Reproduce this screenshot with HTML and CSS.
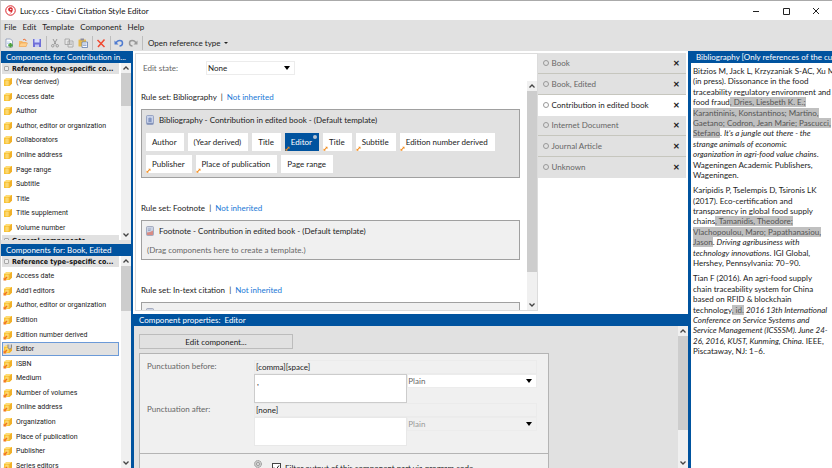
FILE: index.html
```html
<!DOCTYPE html>
<html lang="en">
<head>
<meta charset="utf-8">
<title>Lucy.ccs - Citavi Citation Style Editor</title>
<link rel="stylesheet" href="styles.css">
</head>
<body>
<svg class="defs" aria-hidden="true">
  <symbol id="cube" viewBox="0 0 20 20">
    <path d="M2 6 7 2h11v11l-5 5H2z" fill="#f8c335"/>
    <path d="M2 6 7 2h11l-5 4z" fill="#ffdc74"/>
    <path d="M13 6l5-4v11l-5 5z" fill="#f0b02a"/>
    <path d="M4 10h8M8 7v10M4 14h8" stroke="#ffe69a" stroke-width="1.5" fill="none"/>
  </symbol>
  <symbol id="cube-link" viewBox="0 0 20 20">
    <use href="#cube"/>
    <path d="M1 19V13l2 2 4-4 2 2-4 4 2 2z" fill="#f2741f"/>
  </symbol>
  <symbol id="up" viewBox="0 0 10 10"><path d="M2.500 6.500 5 4l2.500 2.500" fill="none" stroke="#444" stroke-width="1.300"/></symbol>
  <symbol id="down" viewBox="0 0 10 10"><path d="M2.500 3.500 5 6l2.500-2.500" fill="none" stroke="#444" stroke-width="1.300"/></symbol>
  <symbol id="page" viewBox="0 0 16 20"><rect x="1" y="1" width="14" height="18" rx="2" fill="#c9d3ea" stroke="#8493b8" stroke-width="1.500"/><path d="M8 5v9M4 8h8M4 12h8" stroke="#5a70a8" stroke-width="1.500"/><path d="M2 17h12" stroke="#8493b8" stroke-width="3"/></symbol>
  <symbol id="page-red" viewBox="0 0 16 20"><rect x="1" y="1" width="14" height="18" rx="2" fill="#ccd4e4" stroke="#929ab0" stroke-width="1.500"/><path d="M4 6h6M4 9h5" stroke="#8c9cc0" stroke-width="1.500"/><path d="M2 18v-5l6-1 6-3v9z" fill="#d88c84"/></symbol>
  <symbol id="arrow" viewBox="0 0 10 10"><path d="M1 9.500V5l1.500 1.500L6 3 4.500 1.500H9V6L7.500 4.500 4 8l1.500 1.500z" fill="#f28c1e"/></symbol>
</svg>

<div class="window">
  <header class="titlebar">
    <svg class="logo" viewBox="0 0 22 22"><circle cx="11" cy="11" r="9.500" fill="#fff" stroke="#d8232a" stroke-width="2"/><path d="M12 4.500a4.500 4.500 0 1 0 .5 8.500c-.6 2-1.600 3.300-3.500 4.500 4-1 6.500-4.500 6.500-8.500 0-2.700-1.300-4.500-3.500-4.500z" fill="#d8232a"/><circle cx="11.500" cy="9" r="1.500" fill="#fff"/></svg>
    <h1>Lucy.ccs - Citavi Citation Style Editor</h1>
    <div class="winbuttons">
      <button aria-label="Minimize"><svg viewBox="0 0 10 10"><path d="M2 5.500h6" stroke="#222"/></svg></button>
      <button aria-label="Maximize"><svg viewBox="0 0 10 10"><path d="M2.500 2.500h6v6h-6z" fill="none" stroke="#222"/></svg></button>
      <button aria-label="Close"><svg viewBox="0 0 10 10"><path d="M2 2l6 6M8 2 2 8" stroke="#222"/></svg></button>
    </div>
  </header>

  <nav class="menubar">
    <button>File</button><button>Edit</button><button>Template</button><button>Component</button><button>Help</button>
  </nav>

  <div class="toolbar">
    <button aria-label="New"><svg viewBox="0 0 20 20"><path d="M4 2h9l4 4v12H4z" fill="#fff" stroke="#7d8fb0" stroke-width="1.500"/><path d="M6 8h7M6 11h6" stroke="#a9c3e8" stroke-width="1.500"/><path d="M13 10v9M8.500 14.500h9" stroke="#4ba13d" stroke-width="4"/></svg></button>
    <button aria-label="Open"><svg viewBox="0 0 20 20"><path d="M2 17V6h6l2 2h7v9z" fill="#f7b868"/><path d="M2 17l3-7h14l-3 7z" fill="#ffd08b" stroke="#eb9a4a"/><path d="M10 4c3-3 6-1 6 2" fill="none" stroke="#ee6d36" stroke-width="2"/></svg></button>
    <button aria-label="Save"><svg viewBox="0 0 20 20"><path d="M2 2h16v16H2z" fill="#6f6fd8"/><path d="M5 2h10v7H5z" fill="#d6dcfa"/><path d="M6 13h8v5H6z" fill="#c4c8f2"/></svg></button>
    <span class="sep"></span>
    <button aria-label="Cut"><svg viewBox="0 0 20 20"><path d="M6 2l6 11M14 2 8 13" stroke="#999" stroke-width="2"/><circle cx="5.500" cy="15.500" r="2.500" fill="none" stroke="#999" stroke-width="2"/><circle cx="14.500" cy="15.500" r="2.500" fill="none" stroke="#999" stroke-width="2"/></svg></button>
    <button aria-label="Copy"><svg viewBox="0 0 20 20"><path d="M2 2h9v11H2zM8 6h10v12H8z" fill="#e6e6e6" stroke="#9c9c9c" stroke-width="1.500"/><path d="M10 10h6M10 13h6" stroke="#aaa" stroke-width="1.500"/></svg></button>
    <button aria-label="Paste"><svg viewBox="0 0 20 20"><rect x="1" y="3" width="15" height="14" rx="1" fill="#e6b94e"/><path d="M5 1h7v4H5z" fill="#8c8c9c"/><path d="M8 8h11v11H8z" fill="#f6f8ff" stroke="#5977a9" stroke-width="1.500"/><path d="M10 12h7M10 15h7" stroke="#8098bd" stroke-width="1.500"/></svg></button>
    <span class="sep"></span>
    <button aria-label="Delete"><svg viewBox="0 0 20 20"><path d="M3 4l14 14M17 3 4 18" stroke="#f04a32" stroke-width="3"/></svg></button>
    <span class="sep"></span>
    <button aria-label="Undo"><svg viewBox="0 0 20 20"><path d="M4 10c3-7 13-7 13 0 0 4-3 6-6 6" fill="none" stroke="#4f7bd0" stroke-width="3"/><path d="M1 5v8h8z" fill="#4f7bd0"/></svg></button>
    <button aria-label="Redo"><svg viewBox="0 0 20 20"><path d="M16 10C13 3 3 3 3 10c0 4 3 6 6 6" fill="none" stroke="#999" stroke-width="3"/><path d="M19 5v8h-8z" fill="#999"/></svg></button>
    <span class="sep"></span>
    <button class="dropdown">Open reference type</button>
  </div>

  <main class="workspace">
    <aside class="left">
      <section class="panel panel-top">
        <h2>Components for: Contribution in...</h2>
        <div class="scroller">
          <div class="list">
            <h3><i class="toggle"></i>Reference type–specific co...</h3>
            <ul class="rows-11">
              <li><svg><use href="#cube"/></svg>(Year derived)</li>
              <li><svg><use href="#cube"/></svg>Access date</li>
              <li><svg><use href="#cube"/></svg>Author</li>
              <li><svg><use href="#cube"/></svg>Author, editor or organization</li>
              <li><svg><use href="#cube"/></svg>Collaborators</li>
              <li><svg><use href="#cube"/></svg>Online address</li>
              <li><svg><use href="#cube"/></svg>Page range</li>
              <li><svg><use href="#cube"/></svg>Subtitle</li>
              <li><svg><use href="#cube"/></svg>Title</li>
              <li><svg><use href="#cube"/></svg>Title supplement</li>
              <li><svg><use href="#cube"/></svg>Volume number</li>
            </ul>
            <h3><i class="toggle"></i>General components</h3>
          </div>
          <div class="bar"><svg><use href="#up"/></svg><i class="thumb short"></i><svg><use href="#down"/></svg></div>
        </div>
      </section>
      <section class="panel panel-bottom">
        <h2>Components for: Book, Edited</h2>
        <div class="scroller">
          <div class="list">
            <h3><i class="toggle"></i>Reference type–specific co...</h3>
            <ul class="rows-14">
              <li><svg><use href="#cube-link"/></svg>Access date</li>
              <li><svg><use href="#cube-link"/></svg>Add'l editors</li>
              <li><svg><use href="#cube-link"/></svg>Author, editor or organization</li>
              <li><svg><use href="#cube-link"/></svg>Edition</li>
              <li><svg><use href="#cube-link"/></svg>Edition number derived</li>
              <li class="selected"><svg viewBox="0 0 20 20"><use href="#cube-link"/><path d="M10 1v5c0 5 7 5 7 0V1" fill="#ccc" stroke="#888" stroke-width="2"/></svg>Editor</li>
              <li><svg><use href="#cube-link"/></svg>ISBN</li>
              <li><svg><use href="#cube-link"/></svg>Medium</li>
              <li><svg><use href="#cube-link"/></svg>Number of volumes</li>
              <li><svg><use href="#cube-link"/></svg>Online address</li>
              <li><svg><use href="#cube-link"/></svg>Organization</li>
              <li><svg><use href="#cube-link"/></svg>Place of publication</li>
              <li><svg><use href="#cube-link"/></svg>Publisher</li>
              <li><svg><use href="#cube-link"/></svg>Series editors</li>
            </ul>
          </div>
          <div class="bar"><svg><use href="#up"/></svg><i class="thumb short"></i><svg><use href="#down"/></svg></div>
        </div>
      </section>
    </aside>

    <div class="center">
      <div class="upper">
        <section class="editor">
          <div class="state">
            <label for="state">Edit state:</label>
            <span class="select"><select id="state"><option>None</option></select></span>
          </div>
          <div class="scroller">
            <div class="rules">
              <p>Rule set: Bibliography &nbsp;|&nbsp; <a href="#">Not inherited</a></p>
              <div class="template active">
                <h4><svg><use href="#page"/></svg>Bibliography - Contribution in edited book - (Default template)</h4>
                <div class="chips">
                  <span class="chip">Author</span>
                  <span class="chip">(Year derived)</span>
                  <span class="chip">Title</span>
                  <span class="chip current"><svg><use href="#arrow"/></svg>Editor<i class="dot"></i></span>
                  <span class="chip"><svg><use href="#arrow"/></svg>Title</span>
                  <span class="chip"><svg><use href="#arrow"/></svg>Subtitle</span>
                  <span class="chip"><svg><use href="#arrow"/></svg>Edition number derived</span>
                  <span class="chip"><svg><use href="#arrow"/></svg>Publisher</span>
                  <span class="chip"><svg><use href="#arrow"/></svg>Place of publication</span>
                  <span class="chip">Page range</span>
                </div>
              </div>
              <p>Rule set: Footnote &nbsp;|&nbsp; <a href="#">Not inherited</a></p>
              <div class="template">
                <h4><svg><use href="#page-red"/></svg>Footnote - Contribution in edited book - (Default template)</h4>
                <div class="hint">(Drag components here to create a template.)</div>
              </div>
              <p>Rule set: In-text citation &nbsp;|&nbsp; <a href="#">Not inherited</a></p>
              <div class="template">
                <h4><svg><use href="#page-red"/></svg>In-text citation - Contribution in edited book - (Default template)</h4>
              </div>
            </div>
            <div class="bar"><svg><use href="#up"/></svg><i class="thumb long"></i><svg><use href="#down"/></svg></div>
          </div>
        </section>
        <ul class="tabs">
          <li><i></i>Book<button aria-label="Close Book">✕</button></li>
          <li><i></i>Book, Edited<button aria-label="Close Book, Edited">✕</button></li>
          <li class="open"><i></i>Contribution in edited book<button aria-label="Close Contribution">✕</button></li>
          <li><i></i>Internet Document<button aria-label="Close Internet Document">✕</button></li>
          <li><i></i>Journal Article<button aria-label="Close Journal Article">✕</button></li>
          <li><i></i>Unknown<button aria-label="Close Unknown">✕</button></li>
        </ul>
      </div>

      <section class="properties">
        <h2>Component properties: &nbsp;Editor</h2>
        <div class="scroller">
          <div class="form">
            <button class="edit">Edit component...</button>
            <div class="group">
              <div class="fields">
                <label for="before">Punctuation before:</label>
                <div class="field">
                  <output>[comma][space]</output>
                  <div class="inputs">
                    <textarea id="before">, </textarea>
                    <span class="select"><select aria-label="Format before"><option>Plain</option></select></span>
                  </div>
                </div>
                <label for="after">Punctuation after:</label>
                <div class="field off">
                  <output>[none]</output>
                  <div class="inputs">
                    <textarea id="after"></textarea>
                    <span class="select"><select aria-label="Format after"><option>Plain</option></select></span>
                  </div>
                </div>
              </div>
              <div class="filter">
                <svg viewBox="0 0 20 20"><circle cx="10" cy="8" r="7" fill="#ccc" stroke="#999" stroke-width="2" stroke-dasharray="3 1"/><circle cx="10" cy="8" r="3" fill="#eee" stroke="#999" stroke-width="2"/><path d="M6 16h8v3H6z" fill="#999"/></svg>
                <span class="check"><input type="checkbox" id="filter" checked><svg viewBox="0 0 9 9"><path d="M2 4.500 4 6.500 7 2.500" fill="none" stroke="#222"/></svg></span>
                <label for="filter">Filter output of this component part via program code</label>
              </div>
            </div>
          </div>
          <div class="bar"><svg><use href="#up"/></svg><i class="thumb tall"></i><svg><use href="#down"/></svg></div>
        </div>
      </section>
    </div>

    <aside class="preview">
      <h2>Bibliography [Only references of the current type]</h2>
      <div class="refs">
        <p>Bitzios M, Jack L, Krzyzaniak S-AC, Xu M<br>(in press). Dissonance in the food<br>traceability regulatory environment and<br>food fraud<mark>, Dries, Liesbeth K. E.;<br>Karantininis, Konstantinos; Martino,<br>Gaetano; Codron, Jean Marie; Pascucci,<br>Stefano</mark>. <em>It's a jungle out there - the<br>strange animals of economic<br>organization in agri-food value chains</em>.<br>Wageningen Academic Publishers,<br>Wageningen.</p>
        <p>Karipidis P, Tselempis D, Tsironis LK<br>(2017). Eco-certification and<br>transparency in global food supply<br>chains<mark>, Tamanidis, Theodore;<br>Vlachopoulou, Maro; Papathanasiou,<br>Jason</mark>. <em>Driving agribusiness with<br>technology innovations</em>. IGI Global,<br>Hershey, Pennsylvania: 70–90.</p>
        <p>Tian F (2016). An agri-food supply<br>chain traceability system for China<br>based on RFID &amp; blockchain<br>technology<mark>, id.</mark> <em>2016 13th International<br>Conference on Service Systems and<br>Service Management (ICSSSM). June 24-<br>26, 2016, KUST, Kunming, China.</em> IEEE,<br>Piscataway, NJ: 1–6.</p>
      </div>
    </aside>
  </main>
</div>
</body>
</html>
```

FILE: styles.css
```css
* { box-sizing: border-box; margin: 0; padding: 0; }
html, body { height: 100%; overflow: hidden; }
body { font: 8px/10px Lato, "Open Sans", sans-serif; color: #222; background: #fff; }
button, select, textarea, input { font: inherit; color: inherit; border: 0; background: none; border-radius: 0; }
ul { list-style: none; }
a { color: #1a78d6; text-decoration: none; }
.defs { position: absolute; width: 0; height: 0; }

.window { height: 100vh; display: flex; flex-direction: column; border-top: 1px solid #aaa; border-left: 1px solid #ccc; }

.titlebar { display: flex; align-items: center; height: 19px; padding-left: 4px; background: #fff; }
.titlebar h1 { flex: 1; font-size: 8px; font-weight: 400; margin-left: 4px; color: #111; }
.logo { width: 11px; height: 11px; }
.winbuttons { display: flex; margin-right: 1px; }
.winbuttons button { width: 30px; height: 18px; display: flex; align-items: center; justify-content: center; }
.winbuttons svg { width: 10px; height: 10px; }

.menubar { display: flex; gap: 6px; height: 14px; padding-left: 3px; background: #e1e1e1; }

.toolbar { display: flex; align-items: center; height: 17px; padding-left: 3px; gap: 4px; background: #e1e1e1; }
.toolbar svg { display: block; width: 10px; height: 10px; }
.toolbar .sep { width: 1px; height: 14px; margin-right: -1px; background: #bdbdbd; }
.toolbar .dropdown { display: flex; align-items: center; gap: 3px; margin-left: 2px; }
.dropdown::after { content: ""; border: 2px solid transparent; border-top-color: #222; border-bottom: 0; }

.workspace { flex: 1; min-height: 0; display: grid; grid-template-columns: 132px minmax(0, 1fr) 144px; }
h2 { height: 12px; flex: none; padding-left: 5px; font-size: 8px; line-height: 12px; font-weight: 400; color: #fff; background: #00539f; white-space: nowrap; overflow: hidden; }
.scroller { flex: 1; min-height: 0; display: flex; overflow: hidden; }

.bar { flex: none; width: 10px; display: flex; flex-direction: column; background: #f0f0f0; }
.bar svg { flex: none; width: 10px; height: 10px; }
.bar svg:last-child { margin-top: auto; }
.thumb { background: #cdcdcd; }
.thumb.short { flex: 0 1 33px; }
.bar .thumb.long { flex-basis: 181px; }
.bar .thumb.tall { flex-basis: 94px; }

.left { display: grid; grid-template-rows: minmax(0, 189fr) minmax(0, 224fr); border-right: 2px solid #00539f; background: #e1e1e1; gap: 4px; min-height: 0; }
.panel { display: flex; flex-direction: column; min-height: 0; background: #fff; }
.panel-bottom .thumb.short { flex-basis: 45px; }
.list { flex: 1; min-width: 0; overflow: hidden; font: 7px/10px Roboto, "Open Sans", sans-serif; }
.list h3 { display: flex; align-items: center; gap: 3px; height: 11px; margin: 0 2px 0 1px; padding-left: 2px; background: #e1e1e1; font: bold 7px/10px "DejaVu Sans Condensed", "DejaVu Sans", sans-serif; white-space: nowrap; overflow: hidden; color: #111; }
.toggle { width: 5px; height: 5px; border: 1px solid #a8a8a8; border-radius: 1px; background: #eee; }
.list ul { display: grid; margin: 1px 2px 0 1px; }
.panel-bottom ul { margin-top: 2px; }
.rows-11 { height: 160px; grid-template-rows: repeat(11, 1fr); }
.rows-14 { height: 204px; grid-template-rows: repeat(14, 1fr); }
.list li { display: flex; align-items: center; gap: 3px; border: 1px solid transparent; }
.list li svg { width: 10px; height: 10px; }
.list .selected { background: #e1e1e1; border-color: #6b9ad8; }

.center { display: grid; grid-template-rows: minmax(0, 263fr) minmax(0, 154fr); min-height: 0; min-width: 0; }
.upper { min-height: 0; display: flex; padding: 2px 2px 3px; }
.editor { flex: 402 1 0; min-width: 0; display: flex; flex-direction: column; border: 1px solid #dcdcdc; }
.state { display: flex; align-items: center; height: 27px; padding-left: 7px; flex: none; color: #666; }
.state label { width: 63px; }
.select { display: flex; align-items: center; position: relative; background: #fff; border: 1px solid #ececec; color: #222; }
.select select { appearance: none; width: 100%; height: 100%; padding-left: 1px; outline: 0; }
.select::after { content: ""; position: absolute; right: 4px; border: 3px solid transparent; border-top: 4px solid #000; border-bottom: 0; pointer-events: none; }
.state .select { width: 89px; height: 14px; }
.rules { flex: 1; min-width: 0; overflow: hidden; padding: 11px 7px 0 5px; }
.rules p { margin-bottom: 7px; }
.template { border: 1px solid #a0a0a0; background: #f0f0f0; padding: 4px; min-height: 40px; margin-bottom: 25px; }
.template.active { background: #e1e1e1; min-height: 69px; }
.template h4 { display: flex; align-items: center; gap: 5px; height: 12px; font-size: 8px; font-weight: 400; }
.template h4 svg { width: 8px; height: 10px; }
.hint { margin: 8px 0 0 1px; color: #666; }
.chips { display: flex; flex-wrap: wrap; gap: 4px; margin-top: 7px; }
.chip { position: relative; height: 18px; line-height: 18px; padding: 0 7px 0 6px; background: #fff; }
.chip svg { position: absolute; left: 0; bottom: 0; width: 5px; height: 5px; }
.current { background: #00539f; color: #fff; }
.dot { position: absolute; right: 2px; top: 2px; width: 4px; height: 4px; border-radius: 50%; background: #b8c4d4; }

.tabs { flex: 149 1 0; height: 125px; display: grid; grid-template-rows: repeat(6, 1fr); }
.tabs li { display: flex; align-items: center; gap: 3px; padding: 0 5px; background: #e1e1e1; color: #666; border-bottom: 1px solid #c6c6be; }
.tabs li:last-child { border-bottom-color: transparent; }
.tabs i { width: 6px; height: 6px; border: 1px solid #999; border-radius: 50%; }
.tabs button { margin-left: auto; width: 10px; color: #222; font-weight: 700; }
.tabs .open { background: #fff; color: #222; border-color: transparent; }

.properties { min-height: 0; display: flex; flex-direction: column; background: #e1e1e1; border-left: 1px solid #00539f; }
.form { flex: 1; min-width: 0; padding: 8px 129px 0 5px; overflow: hidden; }
.edit { display: block; width: 154px; height: 15px; border: 1px solid #bcbcbc; margin-bottom: 4px; }
.group { border: 1px solid #b4b4b4; background: #f0f0f0; height: 130px; overflow: hidden; }
.fields { display: grid; grid-template-columns: 107px minmax(0, 1fr); padding: 6px 11px 8px 7px; color: #666; height: 99px; }
.fields label { line-height: 13px; }
.field output { display: block; height: 14px; line-height: 13px; padding-left: 1px; color: #222; border: 1px solid #ebebeb; }
.inputs { display: flex; align-items: flex-start; }
.inputs textarea { flex: 150 1 0; min-width: 0; height: 29px; padding: 2px; background: #fff; border: 1px solid #ccc; resize: none; display: block; color: #222; }
.inputs .select { flex: 130 1 0; height: 14px; color: #666; }
.inputs select { padding-left: 0; }
.off .inputs textarea { border-color: #e8e8e8; }
.off .select { background: #f0f0f0; color: #999; }
.filter { display: flex; align-items: flex-start; padding: 6px 0 0 113px; border-top: 1px solid #b4b4b4; white-space: nowrap; }
.filter > svg { width: 10px; height: 10px; }
.check { position: relative; width: 9px; height: 9px; margin: 3px 4px 0 9px; }
.check input { display: block; width: 9px; height: 9px; appearance: none; border: 1px solid #444; background: #fff; }
.check svg { position: absolute; inset: 0; width: 9px; height: 9px; pointer-events: none; }
.filter label { padding-top: 3px; }

.preview { min-width: 0; display: flex; flex-direction: column; border-left: 3px solid #00539f; background: #fff; }
.refs { padding: 3px 0 0 2px; white-space: nowrap; overflow: hidden; line-height: 1.3; }
.refs p { margin-bottom: 5px; }
mark { background: #c0c0c0; color: #555; }
```
